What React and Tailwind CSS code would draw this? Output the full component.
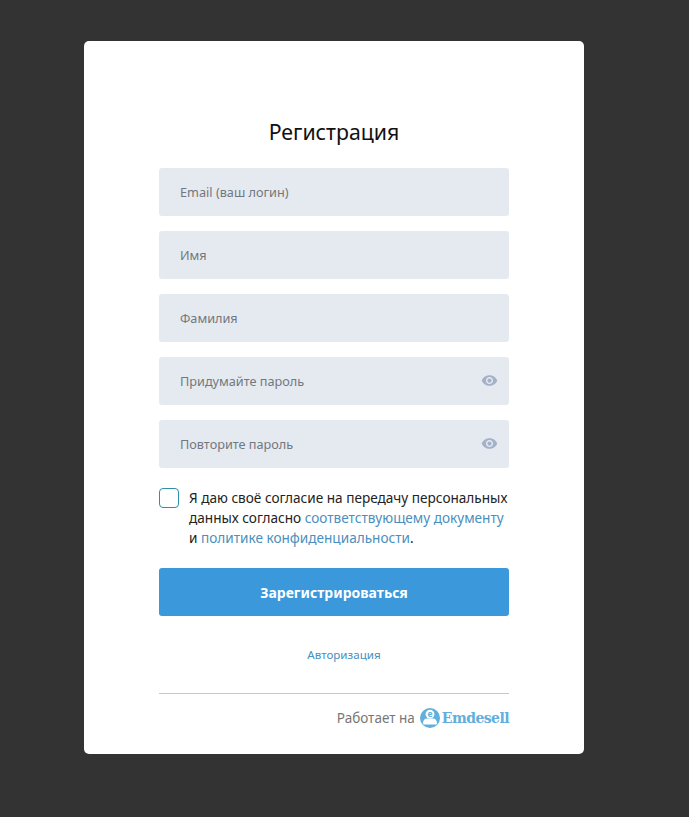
import React from 'react';

const font = "font-['Noto_Sans',sans-serif]";

function EyeIcon() {
  return (
    <svg viewBox="0 0 24 24" className="w-[17px] h-[17px] fill-[#a3b1c9]">
      <path d="M12 4.5C7 4.5 2.73 7.61 1 12c1.73 4.39 6 7.5 11 7.5s9.27-3.11 11-7.5c-1.73-4.39-6-7.5-11-7.5zM12 17c-2.76 0-5-2.24-5-5s2.24-5 5-5 5 2.24 5 5-2.24 5-5 5zm0-8c-1.66 0-3 1.34-3 3s1.34 3 3 3 3-1.34 3-3-1.34-3-3-3z" />
    </svg>
  );
}

function Field({ placeholder, eye }) {
  return (
    <div className="relative h-12 rounded-[3px] bg-[#e5eaf0] flex items-center">
      <input
        placeholder={placeholder}
        className="w-full h-full bg-transparent pl-[21px] pr-10 text-[12.7px] text-[#333] placeholder:text-[#73777e] outline-none"
      />
      {eye && (
        <span className="absolute right-[11px] top-[15px]">
          <EyeIcon />
        </span>
      )}
    </div>
  );
}

function Logo() {
  return (
    <svg viewBox="0 0 20 20" className="w-5 h-5 mr-[2px]">
      <circle cx="10" cy="10" r="10" fill="#62aedc" />
      <path d="M3 15.6c0-3.2 1.8-5 3.8-5h6.4c2 0 3.8 1.8 3.8 5 0 .5-.3.8-.8.8H3.8c-.5 0-.8-.3-.8-.8z" fill="#fff" />
      <circle cx="10" cy="6.2" r="4.4" fill="#fff" />
      <text x="10" y="9" textAnchor="middle" fontSize="8.5" fontWeight="700" fontFamily="Noto Sans, sans-serif" fill="#62aedc">e</text>
    </svg>
  );
}

export default function App() {
  return (
    <div className={`min-h-[817px] bg-[#333333] pt-[41px] pl-[84px] ${font}`}>
      <div className="w-[500px] h-[713px] bg-white rounded-[5px] px-[75px] pt-[76px]">
        <h1 className="text-[21.3px] leading-[30px] text-[#111] text-center">Регистрация</h1>

        <div className="mt-[21px] flex flex-col gap-[15px]">
          <Field placeholder="Email (ваш логин)" />
          <Field placeholder="Имя" />
          <Field placeholder="Фамилия" />
          <Field placeholder="Придумайте пароль" eye />
          <Field placeholder="Повторите пароль" eye />
        </div>

        <div className="mt-[20px] flex gap-[10px]">
          <div className="w-5 h-5 shrink-0 rounded-[4px] border border-[#2f8fa8] bg-white"></div>
          <p className="text-[13.6px] leading-[20px] text-[#222] whitespace-nowrap">
            Я даю своё согласие на передачу персональных
            <br />
            данных согласно <a className="text-[#4a8fbd]">соответствующему документу</a>
            <br />
            и <a className="text-[#4a8fbd]">политике конфиденциальности</a>.
          </p>
        </div>

        <button className="mt-[20px] w-full h-12 rounded-[3px] bg-[#3b98da] text-white text-[14px] font-bold">
          Зарегистрироваться
        </button>

        <div className="mt-[30px] mb-[29px] pl-[20px] text-center text-[11.6px] leading-[18px] text-[#4a8fbd]">
          <a>Авторизация</a>
        </div>

        <div className="border-t border-[#c8c8c8] pt-[14px] flex items-center justify-end gap-[5px]">
          <span className="text-[13.5px] leading-5 text-[#777]">Работает на</span>
          <Logo />
          <span className="-ml-[5px] font-['DejaVu_Serif',serif] font-bold text-[14px] leading-5 tracking-[-0.55px] text-[#62aedc]">
            Emdesell
          </span>
        </div>
      </div>
    </div>
  );
}
